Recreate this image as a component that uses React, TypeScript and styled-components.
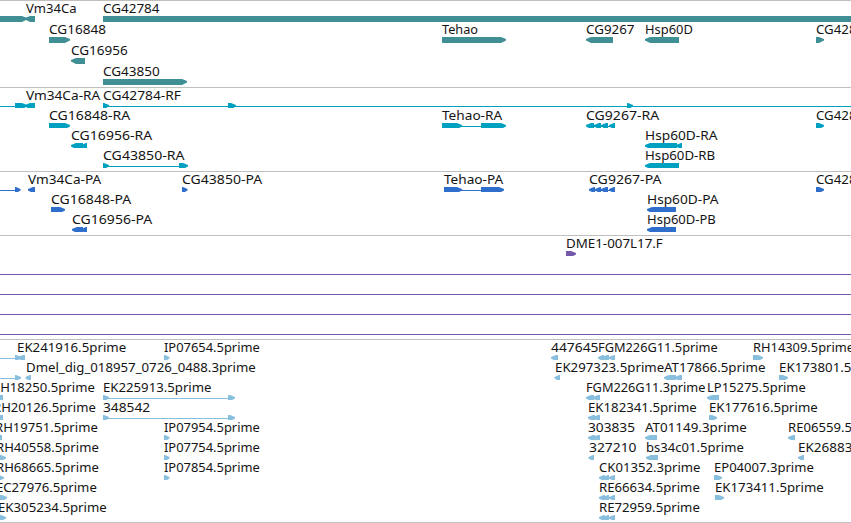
import React from 'react'
import styled, { createGlobalStyle } from 'styled-components'

const GlobalStyle = createGlobalStyle`
  body {
    margin: 0;
    background-color: #ffffff;
    overflow: hidden;
  }
`

// 'R' and 'L' are exons pointing right or left, 'B' is a plain block, '-' is an intron line
type Glyph = ['R' | 'L' | 'B' | '-', number, number]

// text, start, end
type Label = [string, number, number]

interface IRow {
  labels?: Label[],
  glyphs: Glyph[]
}

interface ITrack {
  name: string,
  color: string,
  rowHeight: number,
  spaceAfter: number,
  rows: IRow[]
}

const VIEW_WIDTH = 851

const tracks: ITrack[] = [
  {
    name: 'gene',
    color: '#3f8f94',
    rowHeight: 21,
    spaceAfter: 2,
    rows: [
      {
        labels: [['Vm34Ca', 26, 76], ['CG42784', 103, 159]],
        glyphs: [['R', -10, 27], ['L', 25, 35], ['B', 103, 860]]
      },
      {
        labels: [['CG16848', 49, 105.5], ['Tehao', 442, 477.5], ['CG9267', 586, 634], ['Hsp60D', 645, 692.3], ['CG428', 816, 856]],
        glyphs: [['R', 49, 70], ['R', 442, 506], ['L', 586, 613], ['L', 645, 679], ['R', 816, 824]]
      },
      { labels: [['CG16956', 71, 127.3]], glyphs: [['L', 71, 85]] },
      { labels: [['CG43850', 103, 159.3]], glyphs: [['R', 103, 187]] }
    ]
  },
  {
    name: 'transcript',
    color: '#00a0c0',
    rowHeight: 20,
    spaceAfter: 3,
    rows: [
      {
        labels: [['Vm34Ca-RA', 26, 99.7], ['CG42784-RF', 103, 180.5]],
        glyphs: [['-', 0, 15], ['R', 15, 27], ['L', 25, 35], ['R', 103, 109], ['-', 103, 851], ['R', 228, 236], ['R', 627, 633]]
      },
      {
        labels: [['CG16848-RA', 49, 129.7], ['Tehao-RA', 442, 501.7], ['CG9267-RA', 586, 658.7], ['CG428', 816, 856]],
        glyphs: [
          ['R', 49, 70], ['R', 442, 462], ['-', 460, 482], ['R', 481, 506],
          ['L', 586, 594], ['L', 594, 601], ['L', 601, 608], ['L', 609, 615], ['-', 588, 613], ['R', 816, 824]
        ]
      },
      {
        labels: [['CG16956-RA', 71, 151.7], ['Hsp60D-RA', 645, 717]],
        glyphs: [['L', 71, 83], ['L', 81, 87], ['L', 645, 677], ['L', 676, 682]]
      },
      {
        labels: [['CG43850-RA', 103, 184], ['Hsp60D-RB', 645, 714.7]],
        glyphs: [['R', 103, 109], ['-', 103, 180], ['R', 179, 188], ['L', 645, 679]]
      }
    ]
  },
  {
    name: 'CDS',
    color: '#306ecc',
    rowHeight: 20,
    spaceAfter: 3,
    rows: [
      {
        labels: [['Vm34Ca-PA', 28, 100.7], ['CG43850-PA', 182, 261.7], ['Tehao-PA', 444, 502.7], ['CG9267-PA', 589, 661], ['CG428', 816, 856]],
        glyphs: [
          ['-', 0, 16], ['R', 15, 20.5], ['L', 28, 35], ['R', 182, 187.5],
          ['R', 444, 462], ['-', 460, 482], ['R', 481, 504],
          ['L', 589, 595], ['L', 595, 601], ['L', 601, 608], ['L', 609, 615], ['-', 591, 613], ['R', 816, 824]
        ]
      },
      {
        labels: [['CG16848-PA', 51, 130.7], ['Hsp60D-PA', 647, 718]],
        glyphs: [['R', 51, 65], ['L', 647, 676]]
      },
      {
        labels: [['CG16956-PA', 72, 151.7], ['Hsp60D-PB', 647, 715.3]],
        glyphs: [['L', 72, 83], ['L', 81, 87], ['L', 647, 676]]
      }
    ]
  },
  {
    name: 'BAC',
    color: '#7658ac',
    rowHeight: 20,
    spaceAfter: 3,
    rows: [
      { labels: [['DME1-007L17.F', 566, 662.3]], glyphs: [['R', 566, 576]] },
      { glyphs: [['-', 0, 851]] },
      { glyphs: [['-', 0, 851]] },
      { glyphs: [['-', 0, 851]] },
      { glyphs: [['-', 0, 851]] }
    ]
  },
  {
    name: 'EST',
    color: '#88bede',
    rowHeight: 20,
    spaceAfter: 2,
    rows: [
      {
        labels: [['EK241916.5prime', 17, 125.7], ['IP07654.5prime', 164, 259.3], ['447645', 551, 598], ['FGM226G11.5prime', 598, 717.3], ['RH14309.5prime', 753, 853.5]],
        glyphs: [['-', 0, 16], ['R', 15, 21], ['L', 18, 25], ['R', 164, 169.5], ['L', 551, 558], ['L', 598, 604], ['L', 602, 609], ['L', 609, 615], ['R', 753, 763]]
      },
      {
        labels: [['Dmel_dig_018957_0726_0488.3prime', 26, 255.3], ['EK297323.5prime', 555, 663.7], ['AT17866.5prime', 664, 765], ['EK173801.5prime', 779, 888]],
        glyphs: [['-', 0, 16], ['R', 15, 21], ['L', 25.5, 31], ['L', 554.5, 560], ['L', 664, 676], ['L', 675, 682], ['R', 779, 788]]
      },
      {
        labels: [['RH18250.5prime', -8, 94.3], ['EK225913.5prime', 103, 211], ['FGM226G11.3prime', 586, 705], ['LP15275.5prime', 707, 805.3]],
        glyphs: [['B', -3, 3], ['R', 103, 109], ['-', 103, 229], ['R', 228, 235], ['L', 586, 594], ['L', 593, 600], ['L', 707, 719]]
      },
      {
        labels: [['RH20126.5prime', -7, 95.3], ['348542', 103, 149.7], ['EK182341.5prime', 588, 696.3], ['EK177616.5prime', 709, 817.3]],
        glyphs: [['B', -3, 3], ['R', 103, 109], ['-', 103, 229], ['R', 228, 235], ['L', 588, 595], ['L', 593, 600], ['R', 709, 717]]
      },
      {
        labels: [['RH19751.5prime', -5, 97.3], ['IP07954.5prime', 164, 259.3], ['303835', 588, 634.5], ['AT01149.3prime', 645, 746.3], ['RE06559.5prime', 788, 888]],
        glyphs: [['B', -3, 2], ['R', 164, 169.5], ['L', 588, 595], ['L', 593, 600], ['L', 645, 657], ['L', 788, 795]]
      },
      {
        labels: [['RH40558.5prime', -4, 98.3], ['IP07754.5prime', 164, 259.3], ['327210', 589, 636], ['bs34c01.5prime', 646, 743.3], ['EK26883', 798, 852]],
        glyphs: [['R', -6, 6], ['R', 164, 169.5], ['L', 588.5, 594], ['L', 646, 658], ['L', 798, 804]]
      },
      {
        labels: [['RH68665.5prime', -4, 98.3], ['IP07854.5prime', 164, 259.3], ['CK01352.3prime', 599, 700], ['EP04007.3prime', 714, 813.3]],
        glyphs: [['R', -6, 4], ['R', 164, 169.5], ['L', 599, 605], ['L', 603, 609], ['L', 609, 615], ['R', 714, 722]]
      },
      {
        labels: [['EC27976.5prime', -4, 96.3], ['RE66634.5prime', 599, 699.3], ['EK173411.5prime', 715, 823.3]],
        glyphs: [['R', -6, 7], ['L', 599, 605], ['L', 603, 609], ['L', 609, 615], ['R', 715, 724]]
      },
      {
        labels: [['EK305234.5prime', -2, 106.3], ['RE72959.5prime', 599, 699.3]],
        glyphs: [['R', -6, 6], ['L', 599, 605], ['L', 603, 609], ['L', 609, 615]]
      }
    ]
  }
]

const Viewer = styled.main`
  display: flex;
  flex-direction: column;
  width: ${VIEW_WIDTH}px;
  height: 523px;
  box-sizing: border-box;
  overflow: hidden;
  border-bottom: 1px solid #bfbfbf;
  background-color: #ffffff;
`

const StyledTrack = styled.section<{ $spaceAfter: number }>`
  display: flex;
  flex-direction: column;
  border-top: 1px solid #bfbfbf;
  padding-bottom: ${props => props.$spaceAfter}px;
`

const StyledRow = styled.svg<{ $height: number, $color: string }>`
  display: block;
  flex: none;
  width: ${VIEW_WIDTH}px;
  height: ${props => props.$height}px;
  fill: ${props => props.$color};
`

const StyledLabel = styled.text`
  fill: #141414;
  font-family: 'Noto Sans', 'DejaVu Sans', sans-serif;
  font-size: 12.4px;
`

const HEAD = 5
const TOP = 15
const BOTTOM = 21
const TIP_TOP = 17
const TIP_BOTTOM = 18.6

const glyphPoints = ([kind, start, end]: Glyph) => {
  // short exons keep one full-height pixel behind the head
  const head = Math.min(HEAD, end - start - 1)
  if (kind === 'R') {
    return `${start},${TOP} ${end - head},${TOP} ${end},${TIP_TOP} ${end},${TIP_BOTTOM} ${end - head},${BOTTOM} ${start},${BOTTOM}`
  }
  return `${end},${TOP} ${start + head},${TOP} ${start},${TIP_TOP} ${start},${TIP_BOTTOM} ${start + head},${BOTTOM} ${end},${BOTTOM}`
}

const Feature: React.FC<{ glyph: Glyph }> = ({ glyph }) => {
  const [kind, start, end] = glyph
  if (kind === '-') {
    return <rect x={start} y={18} width={end - start} height={1} />
  }
  if (kind === 'B') {
    return <rect x={start} y={TOP} width={end - start} height={BOTTOM - TOP} />
  }
  return <polygon points={glyphPoints(glyph)} />
}

const Track: React.FC<{ track: ITrack }> = ({ track }) => (
  <StyledTrack $spaceAfter={track.spaceAfter} aria-label={track.name}>
    {track.rows.map((row, i) => (
      <StyledRow key={i} $height={track.rowHeight} $color={track.color}>
        {row.glyphs.map((glyph, j) => <Feature key={j} glyph={glyph} />)}
        {row.labels && row.labels.map(([text, start, end]) => (
          <StyledLabel key={text} x={start} y={12.3} textLength={end - start + 0.5} lengthAdjust="spacingAndGlyphs">{text}</StyledLabel>
        ))}
      </StyledRow>
    ))}
  </StyledTrack>
)

const App: React.FC = () => (
  <>
    <GlobalStyle />
    <Viewer>
      {tracks.map(track => <Track key={track.name} track={track} />)}
    </Viewer>
  </>
)

export default App
